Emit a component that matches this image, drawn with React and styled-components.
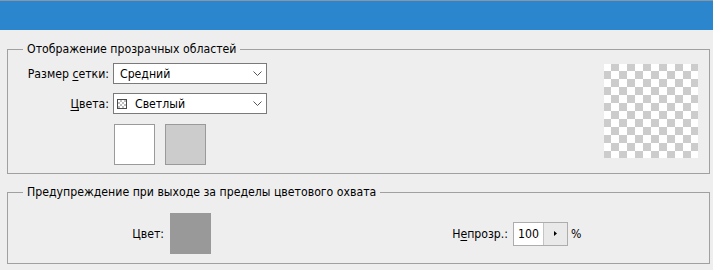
import React from "react";
import styled, { createGlobalStyle } from "styled-components";

const Global = createGlobalStyle`
  html, body {
    margin: 0;
    padding: 0;
    background: #eeeeee;
  }
  body {
    font-family: "DejaVu Sans Condensed", "Liberation Sans", sans-serif;
    font-size: 12.2px;
    color: #000;
  }
  u {
    text-decoration-thickness: 1px;
    text-underline-offset: 2px;
  }
`;

const TitleBar = styled.div`
  height: 29px;
  border-top: 1px solid #8a97a3;
  background: #2b86cd;
`;

const Content = styled.div`
  display: flex;
  flex-direction: column;
  gap: 11px;
  padding: 12px 3px 0 7px;
`;

const Group = styled.fieldset`
  margin: 0;
  padding: 0;
  min-width: 0;
  border: 1px solid #a0a0a0;
`;

const Legend = styled.legend`
  margin-left: 15px;
  padding: 0 4px;
  line-height: 14px;
  white-space: nowrap;
`;

const DisplayBody = styled.div`
  display: flex;
  justify-content: space-between;
  align-items: flex-start;
  padding: 7px 11px 8px 0;
`;

const Form = styled.div`
  display: grid;
  grid-template-columns: 101px 154px;
  column-gap: 4px;
  row-gap: 9px;
  align-items: center;
`;

const Label = styled.label`
  text-align: right;
  white-space: nowrap;
`;

const Select = styled.div`
  box-sizing: border-box;
  height: 21px;
  display: flex;
  align-items: center;
  gap: ${(p) => (p.$withIcon ? "8px" : "0")};
  padding: 0 4px 0 ${(p) => (p.$withIcon ? "3px" : "6px")};
  border: 1px solid #7a7a7a;
  background: #fff;
`;

const SelectText = styled.span`
  flex: 1;
  white-space: nowrap;
`;

const MiniChecker = () => (
  <svg width="10" height="10" viewBox="0 0 10 10" aria-hidden="true" shapeRendering="crispEdges">
    <rect x="0.5" y="0.5" width="9" height="9" fill="#fff" stroke="#4a4a4a" />
    {[0, 1, 2, 3].map((r) =>
      [0, 1, 2, 3].map((c) =>
        (r + c) % 2 === 1 ? (
          <rect key={`${r}-${c}`} x={1 + c * 2} y={1 + r * 2} width="2" height="2" fill="#bdbdbd" />
        ) : null
      )
    )}
  </svg>
);

const Chevron = () => (
  <svg width="9" height="5" viewBox="0 0 9 5" aria-hidden="true">
    <path d="M0.5 0.5 L4.5 4.5 L8.5 0.5" fill="none" stroke="#555" strokeWidth="1" />
  </svg>
);

const SwatchRow = styled.div`
  grid-column: 2;
  display: flex;
  gap: 10px;
  margin-top: 1px;
  padding-left: 1px;
`;

const Swatch = styled.div`
  box-sizing: border-box;
  width: 41px;
  height: 41px;
  background: ${(p) => p.$color};
  border: 1px solid ${(p) => p.$border || p.$color};
`;

const Checker = styled.div`
  width: 94px;
  height: 94px;
  margin-top: 1px;
  background-color: #fff;
  background-image: conic-gradient(#cccccc 25%, #ffffff 0 50%, #cccccc 0 75%, #ffffff 0);
  background-size: 16px 16px;
  background-position: -1px -1px;
`;

const GamutBody = styled.div`
  display: flex;
  align-items: center;
  padding: 14px 0 9px 0;
`;

const FieldLabel = styled.span`
  width: ${(p) => p.$width}px;
  text-align: right;
  white-space: nowrap;
  margin-right: ${(p) => p.$gap}px;
`;

const Spin = styled.div`
  box-sizing: border-box;
  width: 55px;
  height: 24px;
  display: flex;
  border: 1px solid #adadad;
  background: #e9e9e9;
`;

const SpinValue = styled.span`
  width: 30px;
  padding-left: 4px;
  box-sizing: border-box;
  display: flex;
  align-items: center;
  background: #fff;
  border-right: 1px solid #c4c4c4;
`;

const SpinButton = styled.span`
  flex: 1;
  display: flex;
  align-items: center;
  justify-content: center;
`;

const Unit = styled.span`
  margin-left: 3px;
`;

export default function App() {
  return (
    <>
      <Global />
      <TitleBar />
      <Content>
        <Group>
          <Legend>Отображение прозрачных областей</Legend>
          <DisplayBody>
            <Form>
              <Label>
                Размер <u>с</u>етки:
              </Label>
              <Select>
                <SelectText>Средний</SelectText>
                <Chevron />
              </Select>
              <Label>
                <u>Ц</u>вета:
              </Label>
              <Select $withIcon>
                <MiniChecker />
                <SelectText>Светлый</SelectText>
                <Chevron />
              </Select>
              <SwatchRow>
                <Swatch $color="#ffffff" $border="#9a9a9a" />
                <Swatch $color="#cccccc" $border="#9a9a9a" />
              </SwatchRow>
            </Form>
            <Checker />
          </DisplayBody>
        </Group>
        <Group>
          <Legend>Предупреждение при выходе за пределы цветового охвата</Legend>
          <GamutBody>
            <FieldLabel $width={156} $gap={6}>
              Цвет:
            </FieldLabel>
            <Swatch $color="#999999" />
            <FieldLabel $width={297} $gap={5}>
              Н<u>е</u>прозр.:
            </FieldLabel>
            <Spin>
              <SpinValue>100</SpinValue>
              <SpinButton>
                <svg width="3" height="5" viewBox="0 0 3 5" aria-hidden="true">
                  <path d="M0 0 L3 2.5 L0 5 Z" fill="#000" />
                </svg>
              </SpinButton>
            </Spin>
            <Unit>%</Unit>
          </GamutBody>
        </Group>
      </Content>
    </>
  );
}
